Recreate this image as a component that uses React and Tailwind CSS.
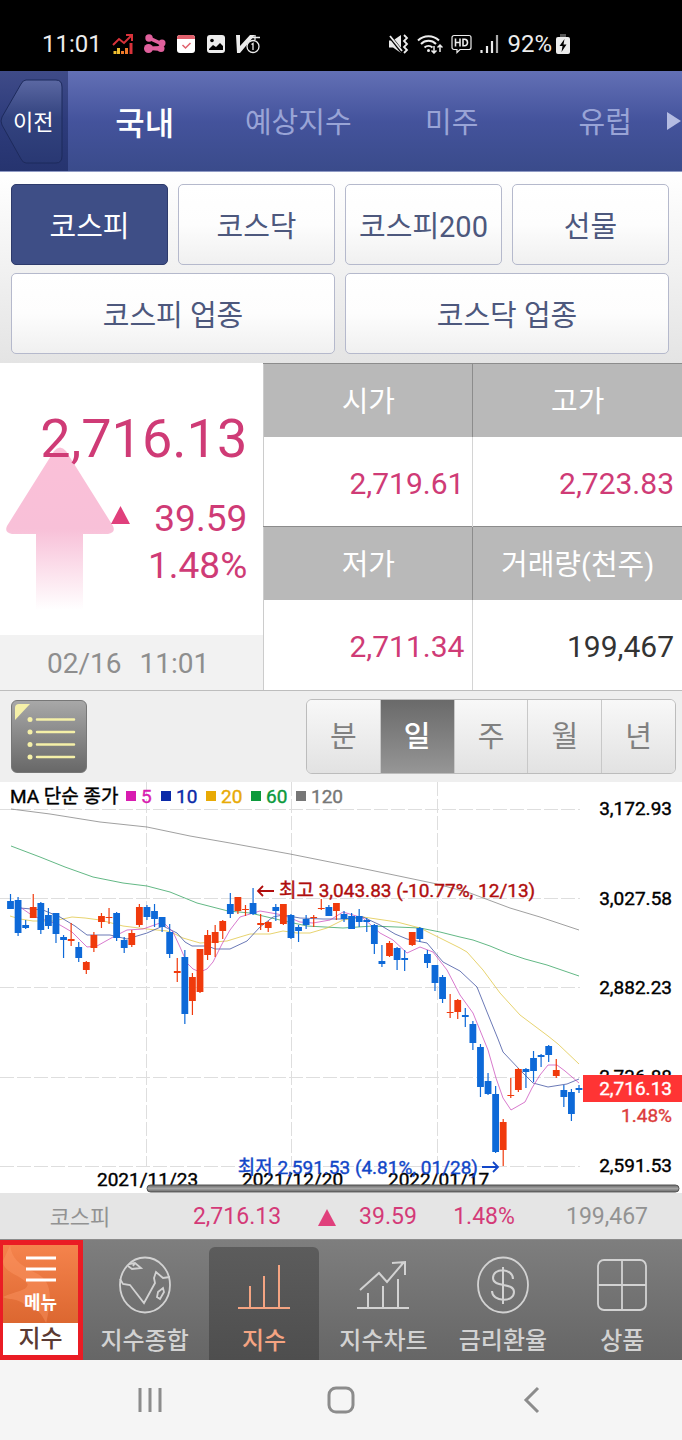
// src/pages/IndexPage.jsx
import { useState } from "react";

const MARKET_TABS = ["국내", "예상지수", "미주", "유럽"];
const INDEX_TABS = ["코스피", "코스닥", "코스피200", "선물"];
const SECTOR_TABS = ["코스피 업종", "코스닥 업종"];
const PERIODS = ["분", "일", "주", "월", "년"];

const RED = "#f03a0c";
const BLUE = "#0d69d8";

// [high, open/close top, open/close bottom, low, up?]
const CANDLES = [
  [112, 119, 127, 127, 0], [115, 118, 151, 154, 0], [138, 143, 146, 147, 0], [112, 125, 136, 136, 1],
  [120, 121, 148, 152, 0], [126, 133, 144, 147, 0], [131, 131, 152, 161, 0], [153, 155, 158, 176, 0],
  [141, 157, 159, 164, 1], [160, 165, 176, 180, 0], [179, 180, 188, 192, 1], [150, 153, 166, 170, 1],
  [131, 134, 140, 146, 1], [126, 135, 136, 142, 1], [130, 131, 156, 159, 0], [155, 158, 166, 171, 0],
  [148, 151, 163, 165, 1], [122, 125, 143, 145, 1], [123, 125, 135, 138, 0], [122, 129, 137, 145, 0],
  [135, 135, 145, 150, 0], [142, 150, 172, 176, 0], [176, 189, 191, 200, 1], [168, 175, 232, 242, 0],
  [191, 195, 219, 233, 1], [167, 167, 210, 211, 1], [148, 153, 173, 178, 1], [143, 150, 161, 175, 1],
  [138, 139, 149, 157, 1], [111, 122, 132, 136, 0], [115, 115, 129, 132, 1], [123, 127, 128, 134, 1],
  [106, 121, 132, 133, 0], [132, 141, 143, 148, 1], [139, 140, 146, 150, 1], [122, 125, 129, 139, 0],
  [122, 122, 142, 143, 1], [132, 133, 156, 157, 0], [143, 145, 149, 160, 0], [133, 137, 143, 147, 0],
  [133, 135, 136, 145, 1], [117, 126, 127, 128, 1], [123, 125, 134, 134, 0], [121, 121, 129, 138, 1],
  [129, 132, 137, 140, 0], [131, 134, 147, 147, 0], [127, 134, 140, 145, 0], [136, 138, 140, 150, 0],
  [142, 143, 162, 172, 0], [163, 179, 182, 185, 0], [159, 161, 174, 175, 1], [165, 166, 178, 188, 0],
  [168, 176, 178, 189, 0], [150, 150, 163, 164, 1], [145, 146, 157, 160, 0], [168, 172, 181, 186, 0],
  [183, 183, 201, 209, 0], [193, 195, 217, 221, 0], [212, 230, 231, 236, 1], [217, 218, 230, 237, 1],
  [226, 233, 235, 245, 0], [239, 242, 261, 268, 0], [262, 265, 305, 315, 0], [291, 299, 312, 313, 0],
  [304, 312, 370, 371, 0], [337, 340, 368, 384, 1], [296, 313, 314, 316, 1], [286, 287, 308, 310, 1],
  [286, 287, 290, 306, 0], [269, 276, 289, 300, 0], [272, 273, 275, 285, 0], [263, 264, 273, 280, 0],
  [277, 288, 294, 296, 1], [303, 308, 315, 325, 0], [307, 310, 332, 339, 0], [303, 306, 308, 311, 0],
];

const MOVING_AVERAGES = [
  { color: "#777777", points: "11,27 50,32 100,40 147,45 190,54 230,61 290,72 370,88 437,102 470,111 510,126 540,135 579,148" },
  { color: "#1f9a50", points: "11,64 40,75 65,85 93,95 123,101 147,104 170,110 197,121 228,129 250,131 280,138 307,144 343,146 373,144 420,146 440,150 460,155 473,158 490,164 507,171 525,177 547,183 579,194" },
  { color: "#dcc030", points: "10,134 20,137 33,139 53,139 72,135 85,136 100,138 123,144 147,147 167,149 175,152 183,156 200,161 227,159 240,155 250,152 270,152 283,149 297,151 310,151 327,146 343,138 363,135 397,140 420,146 440,156 460,166 467,170 483,188 500,211 520,233 548,254 558,262 579,282" },
  { color: "#2b3f96", points: "20,126 43,128 60,135 75,144 87,153 110,153 127,157 147,151 163,144 177,151 185,160 192,164 208,164 215,167 230,167 247,159 260,145 273,135 283,133 300,136 323,137 343,137 363,135 380,143 395,152 407,157 427,161 443,180 460,189 477,205 487,230 498,257 503,270 520,288 533,301 548,305 567,302 579,297" },
  { color: "#c740b8", points: "20,125 33,134 60,143 72,150 87,165 97,164 113,155 127,148 143,147 163,140 173,150 180,165 187,181 193,187 200,190 207,187 213,180 222,162 230,148 240,135 260,129 283,133 300,140 313,141 330,138 343,130 363,136 380,151 393,158 407,171 420,165 433,170 447,188 460,213 473,231 488,268 496,296 503,316 511,328 525,320 532,306 540,293 548,283 557,283 565,289 579,301" },
];

const LEGEND = [
  { x: 126, label: "5", color: "#d81cb0" },
  { x: 161, label: "10", color: "#0b2aa8" },
  { x: 206, label: "20", color: "#e8aa05" },
  { x: 251, label: "60", color: "#0c9a3c" },
  { x: 296, label: "120", color: "#777777" },
];

const AXIS = [
  { y: 33, label: "3,172.93" },
  { y: 123, label: "3,027.58" },
  { y: 212, label: "2,882.23" },
  { y: 301, label: "2,736.88" },
  { y: 390, label: "2,591.53" },
];

function StatusBar() {
  return (
    <div className="flex h-[71px] items-center justify-between bg-black pt-4 pr-[112px] pl-[42px] text-[#ececec]">
      <div className="flex items-center gap-[10px]">
        <span className="text-2xl leading-7">11:01</span>
        <svg className="h-[22px] w-[22px]" viewBox="0 0 22 22" fill="none">
          <path d="M1 12l6-6 5 4 8-8M14 2h6v6" stroke="#d8323a" strokeWidth="2" />
          <path d="M3 21v-3M6.500 21v-6" stroke="#f0c030" strokeWidth="3" />
          <path d="M10.500 21v-3M14.500 21v-6" stroke="#f07a2a" strokeWidth="3" />
          <path d="M19 21V10" stroke="#d8323a" strokeWidth="3" />
        </svg>
        <svg className="h-[20px] w-[22px]" viewBox="0 0 22 20" fill="#e0609c">
          <circle cx="5" cy="4" r="3.700" />
          <circle cx="4.500" cy="14.500" r="4.500" />
          <circle cx="18" cy="9" r="3.500" />
          <circle cx="17" cy="14.500" r="3.500" />
          <path d="M5 2l13 6-2 3L5 6zM5 12.500l12-.5v5L5 16z" />
        </svg>
        <svg className="h-[20px] w-[20px]" viewBox="0 0 20 20" fill="none">
          <rect x="1" y="1" width="18" height="18" rx="3" fill="#fff" />
          <path d="M1 5V4a3 3 0 013-3h12a3 3 0 013 3v1z" fill="#e0606c" />
          <path d="M6.500 11l3 3 5-5" stroke="#e0606c" strokeWidth="1.500" />
        </svg>
        <svg className="h-[20px] w-[20px]" viewBox="0 0 20 20">
          <rect x="1" y="1" width="18" height="18" rx="3" fill="#ececec" />
          <circle cx="6" cy="6.500" r="1.800" fill="#000" />
          <path d="M3 15l4-4 3 2 4-4 3 3v4H3z" fill="#000" />
        </svg>
        <svg className="h-[20px] w-[25px]" viewBox="0 0 25 20" fill="none" stroke="#ececec">
          <path d="M0 1h4v11L14 1h5L4 19H1z" fill="#ececec" stroke="none" />
          <circle cx="17" cy="12.500" r="6" fill="#000" strokeWidth="1.300" />
          <path d="M15.500 10.500l1.500-1V16M14 3.500h10M19 1v5" strokeWidth="1.300" />
        </svg>
      </div>
      <div className="flex items-center gap-2">
        <svg className="h-[20px] w-[21px]" viewBox="0 0 21 20" fill="none" stroke="#ececec">
          <path d="M1 6.500h4L13 1v18l-8-5.500H1z" fill="#ececec" stroke="none" />
          <path d="M0 0l15 19" stroke="#000" strokeWidth="3.500" />
          <path d="M2 2l12 15" strokeWidth="1.800" />
          <path d="M16 1l3 3-3 3 3 3-3 3 3 3-3 3" strokeWidth="1.800" />
        </svg>
        <svg className="h-[20px] w-[26px]" viewBox="0 0 26 20" fill="none" stroke="#ececec" strokeWidth="2">
          <path d="M1 6.500a15 15 0 0121 0M4 10a10.500 10.500 0 0115 0M7.500 13.500a6 6 0 018 0" />
          <circle cx="11.500" cy="16.500" r="1.500" fill="#ececec" stroke="none" />
          <path d="M17 12v7M14.500 16.500L17 19l2.500-2.500M23 18v-7M20.500 13.500L23 11l2.500 2.500" strokeWidth="1.500" />
        </svg>
        <svg className="h-[20px] w-[21px]" viewBox="0 0 21 20" fill="none" stroke="#ececec">
          <path d="M3 1.500h15a2 2 0 012 2v10a2 2 0 01-2 2H9L6 18.500V15.500H3a2 2 0 01-2-2v-10a2 2 0 012-2z" strokeWidth="1.200" />
          <path d="M4.500 4.500v8M9 4.500v8M4.500 8.500H9M12 4.500v8M12 5.200h1.500c4 0 4 6.600 0 6.600H12" strokeWidth="1.600" />
        </svg>
        <svg className="h-[20px] w-[19px]" viewBox="0 0 19 20" fill="none" stroke="#ececec" strokeWidth="2.200">
          <path d="M1.500 19v-3M7 19v-7M12 19V7" />
          <path d="M17 19V1" stroke="#aaaaaa" />
        </svg>
        <div className="flex items-center gap-1">
          <span className="text-2xl leading-7">92%</span>
          <svg className="h-[20px] w-[14px]" viewBox="0 0 14 20">
            <rect x="4" y="0" width="6" height="3" fill="#555" />
            <rect x="0" y="3" width="14" height="17" rx="2" fill="#ececec" />
            <path d="M8.500 5L3.500 12h3l-1 6 5-7.500h-3z" fill="#000" />
          </svg>
        </div>
      </div>
    </div>
  );
}

function Header() {
  const [active, setActive] = useState("국내");

  return (
    <header className="flex h-[101px] border-b border-[#8f9ac4]">
      <div className="w-[68px] bg-linear-to-b from-[#3f4b88] via-[#2d3b7b] to-[#26346f] py-2">
        <button type="button" className="relative flex h-[85px] w-full items-center pt-[2px] pl-[13px] text-[22px] text-white">
          <svg className="absolute inset-y-0 left-0 h-[85px] w-[64px]" viewBox="0 0 64 85">
            <defs>
              <linearGradient id="back" x1="0" y1="0" x2="0" y2="1">
                <stop offset="0" stopColor="#5b68a3" />
                <stop offset="0.450" stopColor="#33437f" />
                <stop offset="1" stopColor="#293873" />
              </linearGradient>
            </defs>
            <path
              d="M26 1h30q6 0 6 7v69q0 7-6 7H26q-3 0-5-4L2 46q-2-4 0-8L21 5q2-4 5-4z"
              fill="url(#back)"
              stroke="#1d2a5c"
            />
          </svg>
          <span className="relative">이전</span>
        </button>
      </div>
      <nav className="relative grid flex-1 grid-cols-4 bg-linear-to-b from-[#6370b5] via-[#44539c] to-[#3a4b8b]">
        {MARKET_TABS.map((tab) => (
          <button
            key={tab}
            type="button"
            onClick={() => setActive(tab)}
            className={
              tab === active
                ? "pt-[6px] text-[32px] font-medium text-white"
                : "pt-[6px] text-[29px] text-[#99a4d6]"
            }
          >
            {tab}
          </button>
        ))}
        <svg className="absolute top-10 right-0 h-5 w-4" viewBox="0 0 16 20">
          <path d="M1 1l14 9-14 9z" fill="#b4bce2" />
        </svg>
      </nav>
    </header>
  );
}

function IndexTabs() {
  const [active, setActive] = useState("코스피");
  const base = "h-[81px] rounded-[5px] border pt-[6px] text-[29px]";
  const idle = "border-[#b5b9cc] bg-linear-to-b from-white via-[#fdfdfd] to-[#f0f0f0] text-[#4d587d]";
  const selected = "border-[#2d3a6b] bg-[#3e4e86] text-white";

  return (
    <div className="grid grid-cols-4 gap-x-[10px] gap-y-2 bg-linear-to-b from-white to-[#e4e4e4] pt-3 pr-[13px] pb-[9px] pl-[11px]">
      {INDEX_TABS.map((tab) => (
        <button
          key={tab}
          type="button"
          onClick={() => setActive(tab)}
          className={`${base} ${tab === active ? selected : idle}`}
        >
          {tab}
        </button>
      ))}
      {SECTOR_TABS.map((tab) => (
        <button
          key={tab}
          type="button"
          onClick={() => setActive(tab)}
          className={`${base} col-span-2 ${tab === active ? selected : idle}`}
        >
          {tab}
        </button>
      ))}
    </div>
  );
}

function Quote() {
  const th = "h-[73px] w-1/2 border-t border-[#8c8c8c] bg-[#b9b9b9] pt-1 text-[29px] font-normal text-white";
  const td = "h-[90px] pt-1 pr-2 text-right text-[30px] text-[#cf3b76]";

  return (
    <section className="flex border-b border-[#bdbdbd]">
      <div className="flex w-[38.600%] flex-col">
        <div className="relative flex-1 pt-[46px] pr-4 text-right text-[#cf3b76]">
          {/* Flecha de subida */}
          <svg className="absolute top-[83px] left-[5px] h-[170px] w-[110px]" viewBox="0 0 110 170">
            <defs>
              <linearGradient id="stem" x1="0" y1="0" x2="0" y2="1">
                <stop offset="0" stopColor="#fbc0d8" />
                <stop offset="0.500" stopColor="#f8c0d8" />
                <stop offset="1" stopColor="#fff" />
              </linearGradient>
            </defs>
            <path
              d="M49 5q6-7 12 0l47 75q3 7-5 8H78v76H31V88H7q-8-1-5-8z"
              fill="url(#stem)"
            />
          </svg>
          <p className="relative text-[54px] leading-[60px]">2,716.13</p>
          <div className="relative flex items-center justify-end gap-6 pt-[26px] text-[37px] leading-[47px]">
            <svg className="h-[26px] w-[19px]" viewBox="0 0 19 26">
              <path d="M9.500 0L19 18H0z" fill="#e0407c" />
            </svg>
            <span>39.59</span>
          </div>
          <p className="relative text-[37px] leading-[47px]">1.48%</p>
        </div>
        <p className="flex h-[55px] items-center gap-[18px] bg-[#f2f2f2] pt-1 pl-[47px] text-[28px] text-[#8e8e8e]">
          <span>02/16</span>
          <span>11:01</span>
        </p>
      </div>
      <table className="flex-1 table-fixed border-l border-[#cccccc]">
        <tbody>
          <tr>
            <th className={th}>시가</th>
            <th className={`${th} border-l`}>고가</th>
          </tr>
          <tr>
            <td className={td}>2,719.61</td>
            <td className={`${td} border-l border-[#d4d4d4]`}>2,723.83</td>
          </tr>
          <tr>
            <th className={th}>저가</th>
            <th className={`${th} border-l`}>거래량(천주)</th>
          </tr>
          <tr>
            <td className={td}>2,711.34</td>
            <td className="h-[90px] border-l border-[#d4d4d4] pt-1 pr-2 text-right text-[30px] text-[#333333]">199,467</td>
          </tr>
        </tbody>
      </table>
    </section>
  );
}

function Toolbar() {
  const [period, setPeriod] = useState("일");

  return (
    <div className="flex h-[91px] items-center justify-between bg-[#efefef] pr-[6px] pl-[11px]">
      <button
        type="button"
        aria-label="목록"
        className="h-[73px] w-[76px] rounded-md border border-[#777777] bg-linear-to-b from-[#a8a8a8] to-[#686868]"
      >
        <svg className="h-[71px] w-[74px]" viewBox="0 0 74 71" fill="#f5f0a8">
          <path d="M3 19V7q0-4 4-4h11z" />
          <path
            d="M25 18.500h37M25 31h37M25 43.500h37M25 56h37"
            stroke="#f5f0a8"
            strokeWidth="2.500"
            strokeLinecap="round"
          />
          <circle cx="18" cy="18.500" r="2.500" />
          <circle cx="18" cy="31" r="2.500" />
          <circle cx="18" cy="43.500" r="2.500" />
          <circle cx="18" cy="56" r="2.500" />
        </svg>
      </button>
      <div className="flex h-[75px] w-[370px] divide-x divide-[#c8c8c8] overflow-hidden rounded-md border border-[#bcbcbc]">
        {PERIODS.map((p) => (
          <button
            key={p}
            type="button"
            onClick={() => setPeriod(p)}
            className={
              p === period
                ? "flex-1 bg-linear-to-b from-[#6a6a6a] to-[#969696] pt-1 text-[29px] font-medium text-white"
                : "flex-1 bg-linear-to-b from-[#f8f8f8] to-[#e2e2e2] pt-1 text-[29px] text-[#808080]"
            }
          >
            {p}
          </button>
        ))}
      </div>
    </div>
  );
}

// Etiqueta del gráfico con un trazo fino para darle algo de peso
function Label({ color = "#000", children, ...props }) {
  return (
    <text fill={color} stroke={color} strokeWidth="0.400" {...props}>
      {children}
    </text>
  );
}

function Chart() {
  const step = 7.58;

  return (
    <svg className="block w-full bg-white text-[19px]" viewBox="0 0 682 411">
      <defs>
        <linearGradient id="scroll" x1="0" y1="0" x2="0" y2="1">
          <stop offset="0" stopColor="#666" />
          <stop offset="0.500" stopColor="#a5a5a5" />
          <stop offset="1" stopColor="#666" />
        </linearGradient>
      </defs>

      <g stroke="#dedede" strokeDasharray="14 3">
        <path d="M0 27.500h580M0 116.500h580M0 205.500h580M0 295.500h580M0 384.500h580" />
        <path d="M146.500 0v384M291.500 0v384M437.500 0v384" />
      </g>

      {MOVING_AVERAGES.map((ma) => (
        <polyline key={ma.color} points={ma.points} fill="none" stroke={ma.color} strokeWidth="0.700" />
      ))}

      {CANDLES.map(([high, top, bottom, low, up], i) => {
        const x = 10.5 + i * step;
        return (
          <g key={i} fill={up ? RED : BLUE}>
            <rect x={x - 0.6} y={high} width="1.200" height={low - high} />
            <rect x={x - 3.4} y={top} width="6.800" height={bottom - top} />
          </g>
        );
      })}

      {/* leyenda */}
      <Label x="10" y="21">MA 단순 종가</Label>
      {LEGEND.map((item) => (
        <g key={item.label}>
          <rect x={item.x} y="9" width="10" height="10" fill={item.color} />
          <Label x={item.x + 15} y="21" color={item.color}>{item.label}</Label>
        </g>
      ))}

      {AXIS.map((item) => (
        <Label key={item.label} x="672" y={item.y} textAnchor="end">{item.label}</Label>
      ))}

      <Label x="97" y="404">2021/11/23</Label>
      <Label x="242" y="404">2021/12/20</Label>
      <Label x="388" y="404">2022/01/17</Label>

      {/* máximo y mínimo */}
      <path d="M274 109h-16M263 104l-5 5 5 5" fill="none" stroke="#b00d0d" strokeWidth="1.800" />
      <Label x="279" y="115" color="#b00d0d">최고 3,043.83 (-10.77%, 12/13)</Label>
      <Label x="478" y="392" textAnchor="end" color="#1247c8">최저 2,591.53 (4.81%, 01/28)</Label>
      <path d="M482 385h16M493 380l5 5-5 5" fill="none" stroke="#1247c8" strokeWidth="1.800" />

      <rect x="583" y="293" width="99" height="27" fill="#ff3434" />
      <Label x="672" y="313" textAnchor="end" color="#fff">2,716.13</Label>
      <Label x="672" y="340" textAnchor="end" color="#dc3c3c">1.48%</Label>

      <rect x="147" y="403" width="532" height="7" rx="3.500" fill="url(#scroll)" stroke="#555" />
    </svg>
  );
}

function Summary() {
  return (
    <div className="flex h-[46px] items-center bg-[#e5e5e5] pt-1 text-[23px] text-[#d43a78]">
      <span className="flex-[160] text-center text-[22px] text-[#929292]">코스피</span>
      <span className="flex-[154] text-center">2,716.13</span>
      <span className="flex flex-[26] justify-center">
        <svg className="h-[18px] w-[18px]" viewBox="0 0 18 18">
          <path d="M9 0l9 17H0z" fill="#e0407c" />
        </svg>
      </span>
      <span className="flex-[96] text-center">39.59</span>
      <span className="flex-[96] text-center">1.48%</span>
      <span className="flex-[150] text-center text-[#929292]">199,467</span>
    </div>
  );
}

function NavIcon({ children }) {
  return (
    <svg className="h-[60px] w-[56px]" viewBox="0 0 56 60" fill="none" stroke="currentColor" strokeWidth="1.800">
      {children}
    </svg>
  );
}

const NAV = [
  {
    label: "지수종합",
    icon: (
      <>
        <ellipse cx="28" cy="30" rx="25" ry="27.500" />
        <path d="M12 9l6-1 6 5-9 1-4-3M18 8l-2 3M3 24l3 5 7 1 14 18 11-20-1-5 2-6 7 6 7-1M41 37l5-4 1 4-4 7-3-2z" />
      </>
    ),
  },
  {
    label: "지수",
    icon: <path d="M2 53h52M14 53V31M28 53V21M43 53V10" strokeWidth="2" />,
  },
  {
    label: "지수차트",
    icon: (
      <path d="M2 53h52M13 53V38M28 53V31M43 53V24M5 35l19-17 8 9L49 7M37 8l13-1v13" strokeWidth="2" />
    ),
  },
  {
    label: "금리환율",
    icon: (
      <>
        <ellipse cx="28" cy="30" rx="25" ry="27.500" />
        <path d="M38 24c0-11-20-12-20-1 0 10 21 4 21 14 0 11-22 10-22-1M28 12v37" strokeWidth="2" />
      </>
    ),
  },
  {
    label: "상품",
    icon: (
      <>
        <rect x="4" y="5" width="48" height="50" rx="6" />
        <path d="M28 5v50M4 30h48" />
      </>
    ),
  },
];

function BottomNav() {
  const [active, setActive] = useState("지수");

  return (
    <nav className="flex h-[121px] border-t border-[#8c8c8c] bg-linear-to-b from-[#7e7e7e] to-[#666666]">
      <button type="button" className="flex w-[83px] flex-col border-[5px] border-l-[3px] border-[#ea1c24]">
        <span className="relative flex w-full flex-1 flex-col items-center bg-linear-to-b from-[#f5834c] to-[#dc6730] pt-[10px] text-lg leading-6 font-bold text-white">
          <svg className="absolute inset-0 h-full w-full" viewBox="0 0 73 78" preserveAspectRatio="none">
            <path
              d="M7 0c1 14 10 20 25 28 14 7 17 20 10 50-8-16-8-10-20-18C12 52 8 56 0 52c12-6 24-6 24-13C18 30 0 28 0 16z"
              fill="#ff9a68"
              opacity="0.400"
            />
          </svg>
          <svg className="relative h-7 w-8" viewBox="0 0 32 28">
            <path d="M1 3h30M1 14h30M1 25h30" stroke="#fff" strokeWidth="3" />
          </svg>
          <span className="relative pt-2">메뉴</span>
        </span>
        <span className="h-8 w-full bg-white text-2xl leading-8 font-medium text-[#5a3a33]">지수</span>
      </button>
      <div className="grid flex-1 grid-cols-5 pl-[2px]">
        {NAV.map((item) => (
          <button
            key={item.label}
            type="button"
            onClick={() => setActive(item.label)}
            className={
              item.label === active
                ? "mx-[5px] mt-[7px] flex flex-col items-center rounded-t-md bg-linear-to-b from-[#5c5c5c] to-[#4e4e4e] pt-2 text-[#f4a482]"
                : "flex flex-col items-center pt-[15px] text-[#d2d2d2]"
            }
          >
            <NavIcon>{item.icon}</NavIcon>
            <span className="pt-[10px] text-2xl leading-8 font-medium whitespace-nowrap">{item.label}</span>
          </button>
        ))}
      </div>
    </nav>
  );
}

function SystemBar() {
  return (
    <div className="flex h-[80px] items-center justify-center gap-[163px] bg-[#f5f5f5] text-[#8c8c8c]">
      <button type="button" aria-label="최근 앱">
        <svg className="h-7 w-7" viewBox="0 0 28 28" stroke="currentColor" strokeWidth="3">
          <path d="M4 2v24M14 2v24M24 2v24" />
        </svg>
      </button>
      <button type="button" aria-label="홈">
        <svg className="h-7 w-7" viewBox="0 0 28 28" fill="none" stroke="currentColor" strokeWidth="3">
          <rect x="2" y="2" width="24" height="24" rx="7" />
        </svg>
      </button>
      <button type="button" aria-label="뒤로">
        <svg className="h-7 w-7" viewBox="0 0 28 28" fill="none" stroke="currentColor" strokeWidth="3">
          <path d="M20 2L8 14l12 12" />
        </svg>
      </button>
    </div>
  );
}

export default function App() {
  return (
    <div className="min-h-screen bg-white font-['Roboto','Noto_Sans_CJK_KR',sans-serif]">
      <StatusBar />
      <Header />
      <main>
        <IndexTabs />
        <Quote />
        <Toolbar />
        <Chart />
        <Summary />
      </main>
      <BottomNav />
      <SystemBar />
    </div>
  );
}
